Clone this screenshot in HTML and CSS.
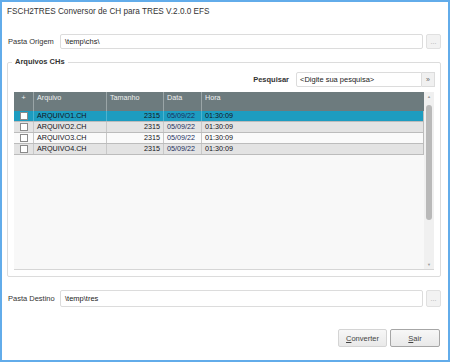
FILE: index.html
```html
<!DOCTYPE html>
<html lang="pt">
<head>
  <meta charset="UTF-8"/>
  <title>FSCH2TRES Conversor de CH para TRES</title>
  <link rel="stylesheet" href="styles.css">
</head>
<body>
  <div class="window">
    <div class="title">FSCH2TRES Conversor de CH para TRES V.2.0.0 EFS</div>

    <div class="path-row origem">
      <label class="path-label">Pasta Origem</label>
      <div class="field">\temp\chs\</div>
      <button class="dots">...</button>
    </div>

    <div class="group">
      <div class="group-title">Arquivos CHs</div>
      <div class="search-row">
        <span class="search-label">Pesquisar</span>
        <div class="field search-field">&lt;Digite sua pesquisa&gt;</div>
        <button class="search-btn">&raquo;</button>
      </div>
      <div class="grid">
        <div class="grid-body">
          <div class="row head">
            <div class="cell c-check">+</div>
            <div class="cell c-name">Arquivo</div>
            <div class="cell c-size">Tamanho</div>
            <div class="cell c-date">Data</div>
            <div class="cell c-time">Hora</div>
          </div>
          <div class="row selected">
            <div class="cell c-check"><span class="box"></span></div>
            <div class="cell c-name">ARQUIVO1.CH</div>
            <div class="cell c-size">2315</div>
            <div class="cell c-date">05/09/22</div>
            <div class="cell c-time">01:30:09</div>
          </div>
          <div class="row odd">
            <div class="cell c-check"><span class="box"></span></div>
            <div class="cell c-name">ARQUIVO2.CH</div>
            <div class="cell c-size">2315</div>
            <div class="cell c-date">05/09/22</div>
            <div class="cell c-time">01:30:09</div>
          </div>
          <div class="row even">
            <div class="cell c-check"><span class="box"></span></div>
            <div class="cell c-name">ARQUIVO3.CH</div>
            <div class="cell c-size">2315</div>
            <div class="cell c-date">05/09/22</div>
            <div class="cell c-time">01:30:09</div>
          </div>
          <div class="row odd">
            <div class="cell c-check"><span class="box"></span></div>
            <div class="cell c-name">ARQUIVO4.CH</div>
            <div class="cell c-size">2315</div>
            <div class="cell c-date">05/09/22</div>
            <div class="cell c-time">01:30:09</div>
          </div>
        </div>
        <div class="scrollbar">
          <span class="arrow">&#9650;</span>
          <div class="track"><div class="thumb"></div></div>
          <span class="arrow">&#9660;</span>
        </div>
      </div>
    </div>

    <div class="path-row destino">
      <label class="path-label">Pasta Destino</label>
      <div class="field">\temp\tres</div>
      <button class="dots">...</button>
    </div>

    <div class="actions">
      <button class="btn"><u>C</u>onverter</button>
      <button class="btn default"><u>S</u>air</button>
    </div>
  </div>
</body>
</html>
```

FILE: styles.css
```css
body {
  margin:0;
  background:#fff;
  font-family:'Liberation Sans',Arial,sans-serif;
  color:#222;
}
.window {
  width:450px;
  height:362px;
  box-sizing:border-box;
  border:2px solid #62acea;
  padding:0 7px 0 5px;
  display:flex;
  flex-direction:column;
  background:#fff;
}
.title {
  height:22px;
  line-height:20px;
  font-size:8.2px;
  color:#333;
}
.path-row {
  display:flex;
  align-items:center;
  height:15px;
}
.origem { margin-top:10px; }
.destino { margin-top:13px; height:17px; }
.path-label {
  width:52px;
  padding-left:1px;
  font-size:7.5px;
  color:#333;
}
.field {
  flex:1;
  height:100%;
  box-sizing:border-box;
  border:1px solid #dcdcdc;
  border-radius:2px;
  background:#fff;
  font-size:7.5px;
  line-height:13px;
  padding-left:4px;
  color:#222;
}
.destino .field { line-height:15px; }
.dots {
  width:15px;
  height:100%;
  margin-left:3px;
  padding:0;
  border:1px solid #e0e0e0;
  border-radius:2px;
  background:#f2f2f2;
  color:#aaa;
  font-size:7px;
  font-family:inherit;
  line-height:8px;
}
.group {
  position:relative;
  margin-top:13px;
  height:215px;
  box-sizing:border-box;
  border:1px solid #dcdcdc;
  border-radius:2px;
  padding:9px 5px 6px 6px;
  display:flex;
  flex-direction:column;
}
.group-title {
  position:absolute;
  top:-6px;
  left:4px;
  padding:0 3px;
  background:#fff;
  font-size:7.5px;
  font-weight:bold;
  color:#333;
  line-height:10px;
}
.search-row {
  display:flex;
  align-items:center;
  justify-content:flex-end;
  height:15px;
}
.search-label {
  font-size:7.5px;
  font-weight:bold;
  color:#333;
  margin-right:7px;
}
.search-field {
  flex:none;
  width:126px;
  padding-left:3px;
  border-radius:2px 0 0 2px;
}
.search-btn {
  width:13px;
  height:100%;
  padding:0;
  border:1px solid #dcdcdc;
  border-left:none;
  background:#f0f0f0;
  color:#666;
  font-size:7px;
  line-height:8px;
}
.grid {
  margin-top:5px;
  margin-right:1px;
  flex:1;
  display:flex;
  background:#f8f8f8;
  border-bottom:1px solid #d6d6d6;
}
.grid-body {
  flex:1;
  display:flex;
  flex-direction:column;
}
.row {
  display:flex;
  height:11px;
  box-sizing:border-box;
  border-bottom:1px solid #bcbcbc;
  border-right:1px solid #bcbcbc;
  font-size:7.2px;
  line-height:10px;
  color:#141420;
}
.row.head {
  height:19px;
  background:#6d7b7e;
  color:#eef0f0;
  border:none;
  line-height:12px;
}
.row.selected { background:#1d9cc0; }
.row.odd { background:#e3e3e3; }
.row.even { background:#fafafa; }
.cell {
  box-sizing:border-box;
  padding:0 3px;
  border-right:1px solid #c8c8c8;
  white-space:nowrap;
  overflow:hidden;
}
.head .cell { border-right:1px solid #9aa5a7; }
.selected .cell { border-right-color:#4eb3d0; }
.c-check { width:20px; text-align:center; padding:0; display:flex; justify-content:center; }
.head .c-check { display:block; }
.c-name { width:73px; }
.c-size { width:57px; text-align:right; }
.head .c-size { text-align:left; }
.c-date { width:38px; color:#1b2f5c; }
.head .c-date { color:#eef0f0; }
.c-time { flex:1; border-right:none; }
.head .c-time { border-right:none; }
.box {
  width:6px;
  height:6px;
  margin-top:1px;
  background:#fff;
  border:1px solid #8a8a8a;
}
.scrollbar {
  width:10px;
  background:#f0f0f0;
  display:flex;
  flex-direction:column;
  align-items:center;
}
.arrow {
  font-size:4px;
  color:#999;
  height:9px;
  line-height:9px;
}
.track {
  flex:1;
  width:100%;
  display:flex;
  justify-content:center;
  padding-top:4px;
}
.thumb {
  width:6px;
  height:115px;
  border-radius:3px;
  background:#b9b9b9;
}
.actions {
  margin-top:22px;
  display:flex;
  justify-content:flex-end;
  gap:3px;
  padding-right:1px;
}
.btn {
  width:49px;
  height:18px;
  padding:0;
  border:1px solid #d4d4d4;
  border-radius:2px;
  background:linear-gradient(#f7f7f7,#e9e9e9);
  font-family:inherit;
  font-size:7.5px;
  color:#444;
}
.btn.default {
  width:50px;
  border-color:#a6a6a6;
}
```
